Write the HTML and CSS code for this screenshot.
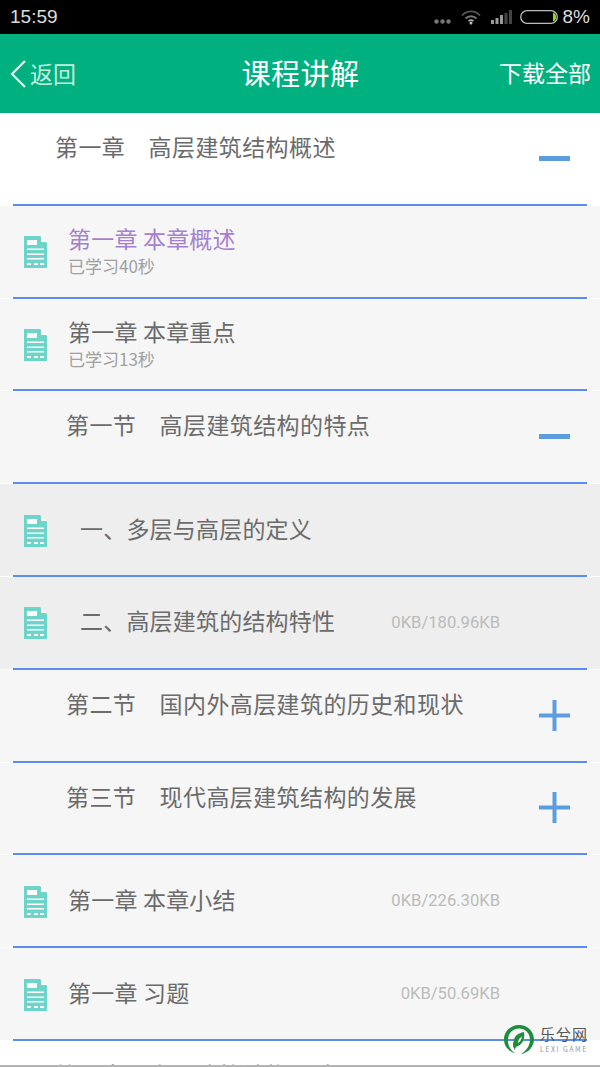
FILE: index.html
```html
<!DOCTYPE html>
<html lang="zh-CN">
<head>
  <meta charset="UTF-8" />
  <meta name="viewport" content="width=device-width, initial-scale=1.0" />
  <title>课程讲解</title>
  <link rel="stylesheet" href="styles.css">
</head>
<body>
  <svg class="defs" width="0" height="0">
    <symbol id="doc" viewBox="0 0 23 32">
      <path d="M0 0H16L23 7V32H0Z" fill="#6dd4c9"/>
      <path d="M17 0.500L22.500 6H17Z" fill="#fff"/>
      <path d="M3 4H13V9H3ZM3 12.500H20V14H3ZM3 17.500H20V19H3ZM3 22H20V23.500H3ZM3 27H7V29H3ZM10 27H14V29H10ZM16 27H20V29H16Z" fill="#fff"/>
    </symbol>
    <symbol id="minus" viewBox="0 0 31 31">
      <rect x="0" y="13" width="31" height="5" fill="#5c9ddd"/>
    </symbol>
    <symbol id="plus" viewBox="0 0 31 31">
      <path d="M0 13.500H13.500V0H17.500V13.500H31V17.500H17.500V31H13.500V17.500H0Z" fill="#5c9ddd"/>
    </symbol>
  </svg>

  <!-- Status bar -->
  <div class="statusbar">
    <span class="clock">15:59</span>
    <div class="status-icons">
      <svg class="dots" width="17" height="5" viewBox="0 0 17 5">
        <circle cx="2.500" cy="2.500" r="2.200" fill="#777"/>
        <circle cx="8.500" cy="2.500" r="2.200" fill="#777"/>
        <circle cx="14.500" cy="2.500" r="2.200" fill="#777"/>
      </svg>
      <svg width="20" height="15" viewBox="0 0 20 15" fill="none" stroke="#555" stroke-width="1.800">
        <path d="M1 5.500C6 0 14 0 19 5.500"/>
        <path d="M4.500 8.500C7.500 5.500 12.500 5.500 15.500 8.500" stroke="#777"/>
        <path d="M7.500 11C9 10 11 10 12.500 11" stroke="#aaa"/>
        <circle cx="10" cy="13" r="1.500" fill="#bbb" stroke="none"/>
      </svg>
      <svg width="21" height="15" viewBox="0 0 21 15">
        <rect x="0" y="10" width="3" height="4" fill="#999"/>
        <rect x="4.500" y="8" width="3" height="6" fill="#999"/>
        <rect x="9" y="5" width="3" height="9" fill="#999"/>
        <rect x="13.500" y="3" width="3" height="11" fill="#444"/>
        <rect x="18" y="0" width="3" height="14" fill="#444"/>
      </svg>
      <svg class="battery" width="38" height="14" viewBox="0 0 38 14">
        <rect x="0.700" y="0.700" width="36.600" height="12.600" rx="6.300" fill="none" stroke="#bbb" stroke-width="1.300"/>
        <path d="M33 2.500C35.500 3.500 36 5 36 7C36 9 35.500 10.500 33 11.500Z" fill="#8fdc1e"/>
      </svg>
      <span class="battery-text">8%</span>
    </div>
  </div>

  <!-- Title bar -->
  <header class="topbar">
    <div class="back">
      <svg width="16" height="28" viewBox="0 0 16 28" fill="none" stroke="#e4f7f0" stroke-width="2.200">
        <path d="M15 1L2 14L15 27"/>
      </svg>
      <span>返回</span>
    </div>
    <h1>课程讲解</h1>
    <div class="download-all">下载全部</div>
  </header>

  <main class="course-list">
    <div class="row row-white">
      <div class="row-body">
        <span class="chapter-title">第一章　高层建筑结构概述</span>
        <svg class="toggle"><use href="#minus"/></svg>
      </div>
      <div class="rule"></div>
    </div>

    <div class="row">
      <div class="row-body row-lesson">
        <svg class="doc-icon"><use href="#doc"/></svg>
        <div class="lesson-text">
          <div class="lesson-name visited">第一章 本章概述</div>
          <div class="lesson-progress">已学习40秒</div>
        </div>
      </div>
      <div class="rule"></div>
    </div>

    <div class="row">
      <div class="row-body row-lesson">
        <svg class="doc-icon"><use href="#doc"/></svg>
        <div class="lesson-text">
          <div class="lesson-name">第一章 本章重点</div>
          <div class="lesson-progress">已学习13秒</div>
        </div>
      </div>
      <div class="rule"></div>
    </div>

    <div class="row">
      <div class="row-body">
        <span class="section-title">第一节　高层建筑结构的特点</span>
        <svg class="toggle"><use href="#minus"/></svg>
      </div>
      <div class="rule"></div>
    </div>

    <div class="row row-grey">
      <div class="row-body row-lesson">
        <svg class="doc-icon"><use href="#doc"/></svg>
        <div class="lesson-name indented">一、多层与高层的定义</div>
      </div>
      <div class="rule"></div>
    </div>

    <div class="row row-grey">
      <div class="row-body row-lesson">
        <svg class="doc-icon"><use href="#doc"/></svg>
        <div class="lesson-name indented">二、高层建筑的结构特性</div>
        <span class="file-size">0KB/180.96KB</span>
      </div>
      <div class="rule"></div>
    </div>

    <div class="row">
      <div class="row-body">
        <span class="section-title">第二节　国内外高层建筑的历史和现状</span>
        <svg class="toggle"><use href="#plus"/></svg>
      </div>
      <div class="rule"></div>
    </div>

    <div class="row">
      <div class="row-body">
        <span class="section-title">第三节　现代高层建筑结构的发展</span>
        <svg class="toggle"><use href="#plus"/></svg>
      </div>
      <div class="rule"></div>
    </div>

    <div class="row">
      <div class="row-body row-lesson">
        <svg class="doc-icon"><use href="#doc"/></svg>
        <div class="lesson-name">第一章 本章小结</div>
        <span class="file-size">0KB/226.30KB</span>
      </div>
      <div class="rule"></div>
    </div>

    <div class="row">
      <div class="row-body row-lesson">
        <svg class="doc-icon"><use href="#doc"/></svg>
        <div class="lesson-name">第一章 习题</div>
        <span class="file-size">0KB/50.69KB</span>
      </div>
      <div class="rule"></div>
    </div>

    <div class="row row-white">
      <div class="row-body">
        <span class="chapter-title">第二章　高层建筑结构设计</span>
      </div>
    </div>
  </main>

  <!-- Watermark over the list -->
  <div class="watermark">
    <svg width="30" height="29" viewBox="0 0 30 29">
      <path d="M15 0C23 0 30 6 30 14.500C30 22 24 28 17 29C22 26 26 21 26 14.500C26 8 21 3.500 15 3.500C9 3.500 4.500 8 4 14C3.500 20 6 25 11 28C4 26 0 21 0 14.500C0 6 7 0 15 0Z" fill="#1f8c3b"/>
      <path d="M10 16C10 11 14 8 20 7C21 13 19 19 14 21C12 21.500 11 23 11 25C8.500 22 8.500 18 10 16Z" fill="#1f8c3b"/>
      <path d="M14 18C14 15 15.500 13 18 11.500C17.500 14 16.500 16.500 14 18Z" fill="#fff"/>
    </svg>
    <div class="watermark-text">
      <div class="watermark-name">乐兮网</div>
      <div class="watermark-sub">LEXI GAME</div>
    </div>
  </div>
  <div class="bottom-edge"></div>
</body>
</html>
```

FILE: styles.css
```css
* {
  margin: 0;
  padding: 0;
  box-sizing: border-box;
  font-family: "Noto Sans CJK SC", "Liberation Sans", sans-serif;
}
html, body {
  height: 1067px;
  overflow: hidden;
}
body {
  position: relative;
  background-color: #fff;
  color: #6b6b6b;
}
.defs {
  position: absolute;
}

/* Status bar */
.statusbar {
  height: 34px;
  background-color: #000;
  display: flex;
  align-items: center;
  justify-content: space-between;
  padding: 0 10px;
  color: #ddd;
}
.clock, .battery-text {
  font-family: "Liberation Sans", sans-serif;
  font-size: 19px;
}
.status-icons {
  display: flex;
  align-items: center;
  gap: 10px;
}
.dots {
  margin-top: 8px;
}
.battery {
  margin-left: -2px;
}
.battery-text {
  margin-left: -5px;
}

/* Title bar */
.topbar {
  height: 79px;
  background-color: #00b07f;
  display: grid;
  grid-template-columns: 1fr auto 1fr;
  align-items: center;
  padding: 0 9px 0 10px;
  color: #fff;
}
.topbar h1 {
  font-size: 29px;
  font-weight: 400;
  line-height: 1;
  letter-spacing: 0.500px;
  margin-top: -2px;
}
.back {
  display: flex;
  align-items: center;
  gap: 4px;
  font-size: 23px;
  color: #c4eee0;
}
.back span {
  margin-top: -1px;
}
.download-all {
  justify-self: end;
  font-size: 23px;
  margin-top: -3px;
}

/* Course list */
.course-list {
  height: 954px;
  overflow: hidden;
}
.row {
  height: 92.800px;
  background-color: #f6f6f6;
  display: flex;
  flex-direction: column;
  border-bottom: 1px solid #fff;
}
.row-white {
  background-color: #fff;
}
.row-grey {
  background-color: #eee;
}
.row-body {
  flex: 1;
  display: flex;
  align-items: flex-start;
  padding: 16px 30px 0 55px;
}
.row-lesson {
  align-items: center;
  padding: 0 100px 0 24px;
}
.rule {
  height: 2px;
  margin: 0 13px -1px;
  background-color: #5b8def;
}
.chapter-title, .section-title {
  font-size: 23px;
  line-height: 34px;
  letter-spacing: 0.400px;
  white-space: nowrap;
}
.section-title {
  margin-left: 11px;
}
.toggle {
  width: 31px;
  height: 31px;
  margin-left: auto;
  flex-shrink: 0;
  align-self: center;
  margin-top: -16px;
}
.doc-icon {
  width: 23px;
  height: 32px;
  flex-shrink: 0;
  margin-top: 2px;
}
.lesson-text {
  margin-left: 21px;
}
.lesson-name {
  font-size: 23px;
  line-height: 30px;
  letter-spacing: 0.200px;
  margin-left: 21px;
  margin-bottom: 4px;
  white-space: nowrap;
}
.lesson-text .lesson-name {
  margin-left: 0;
  margin-bottom: 0;
}
.lesson-name.indented {
  margin-left: 33px;
}
.visited {
  color: #a680cf;
}
.lesson-progress {
  font-size: 17px;
  line-height: 26px;
  color: #a0a0a0;
}
.file-size {
  margin-left: auto;
  font-family: "Roboto", sans-serif;
  font-size: 16.600px;
  color: #bbb;
}

/* Watermark */
.watermark {
  position: absolute;
  left: 504px;
  top: 1025px;
  display: flex;
  gap: 6px;
}
.watermark-name {
  font-size: 15px;
  line-height: 18px;
  color: #555;
  letter-spacing: 1px;
}
.watermark-sub {
  font-size: 7px;
  line-height: 12px;
  letter-spacing: 1.500px;
  color: #999;
  white-space: nowrap;
}
.bottom-edge {
  position: absolute;
  left: 0;
  right: 0;
  bottom: 0;
  height: 2px;
  background-color: #b4b4b4;
}
```
